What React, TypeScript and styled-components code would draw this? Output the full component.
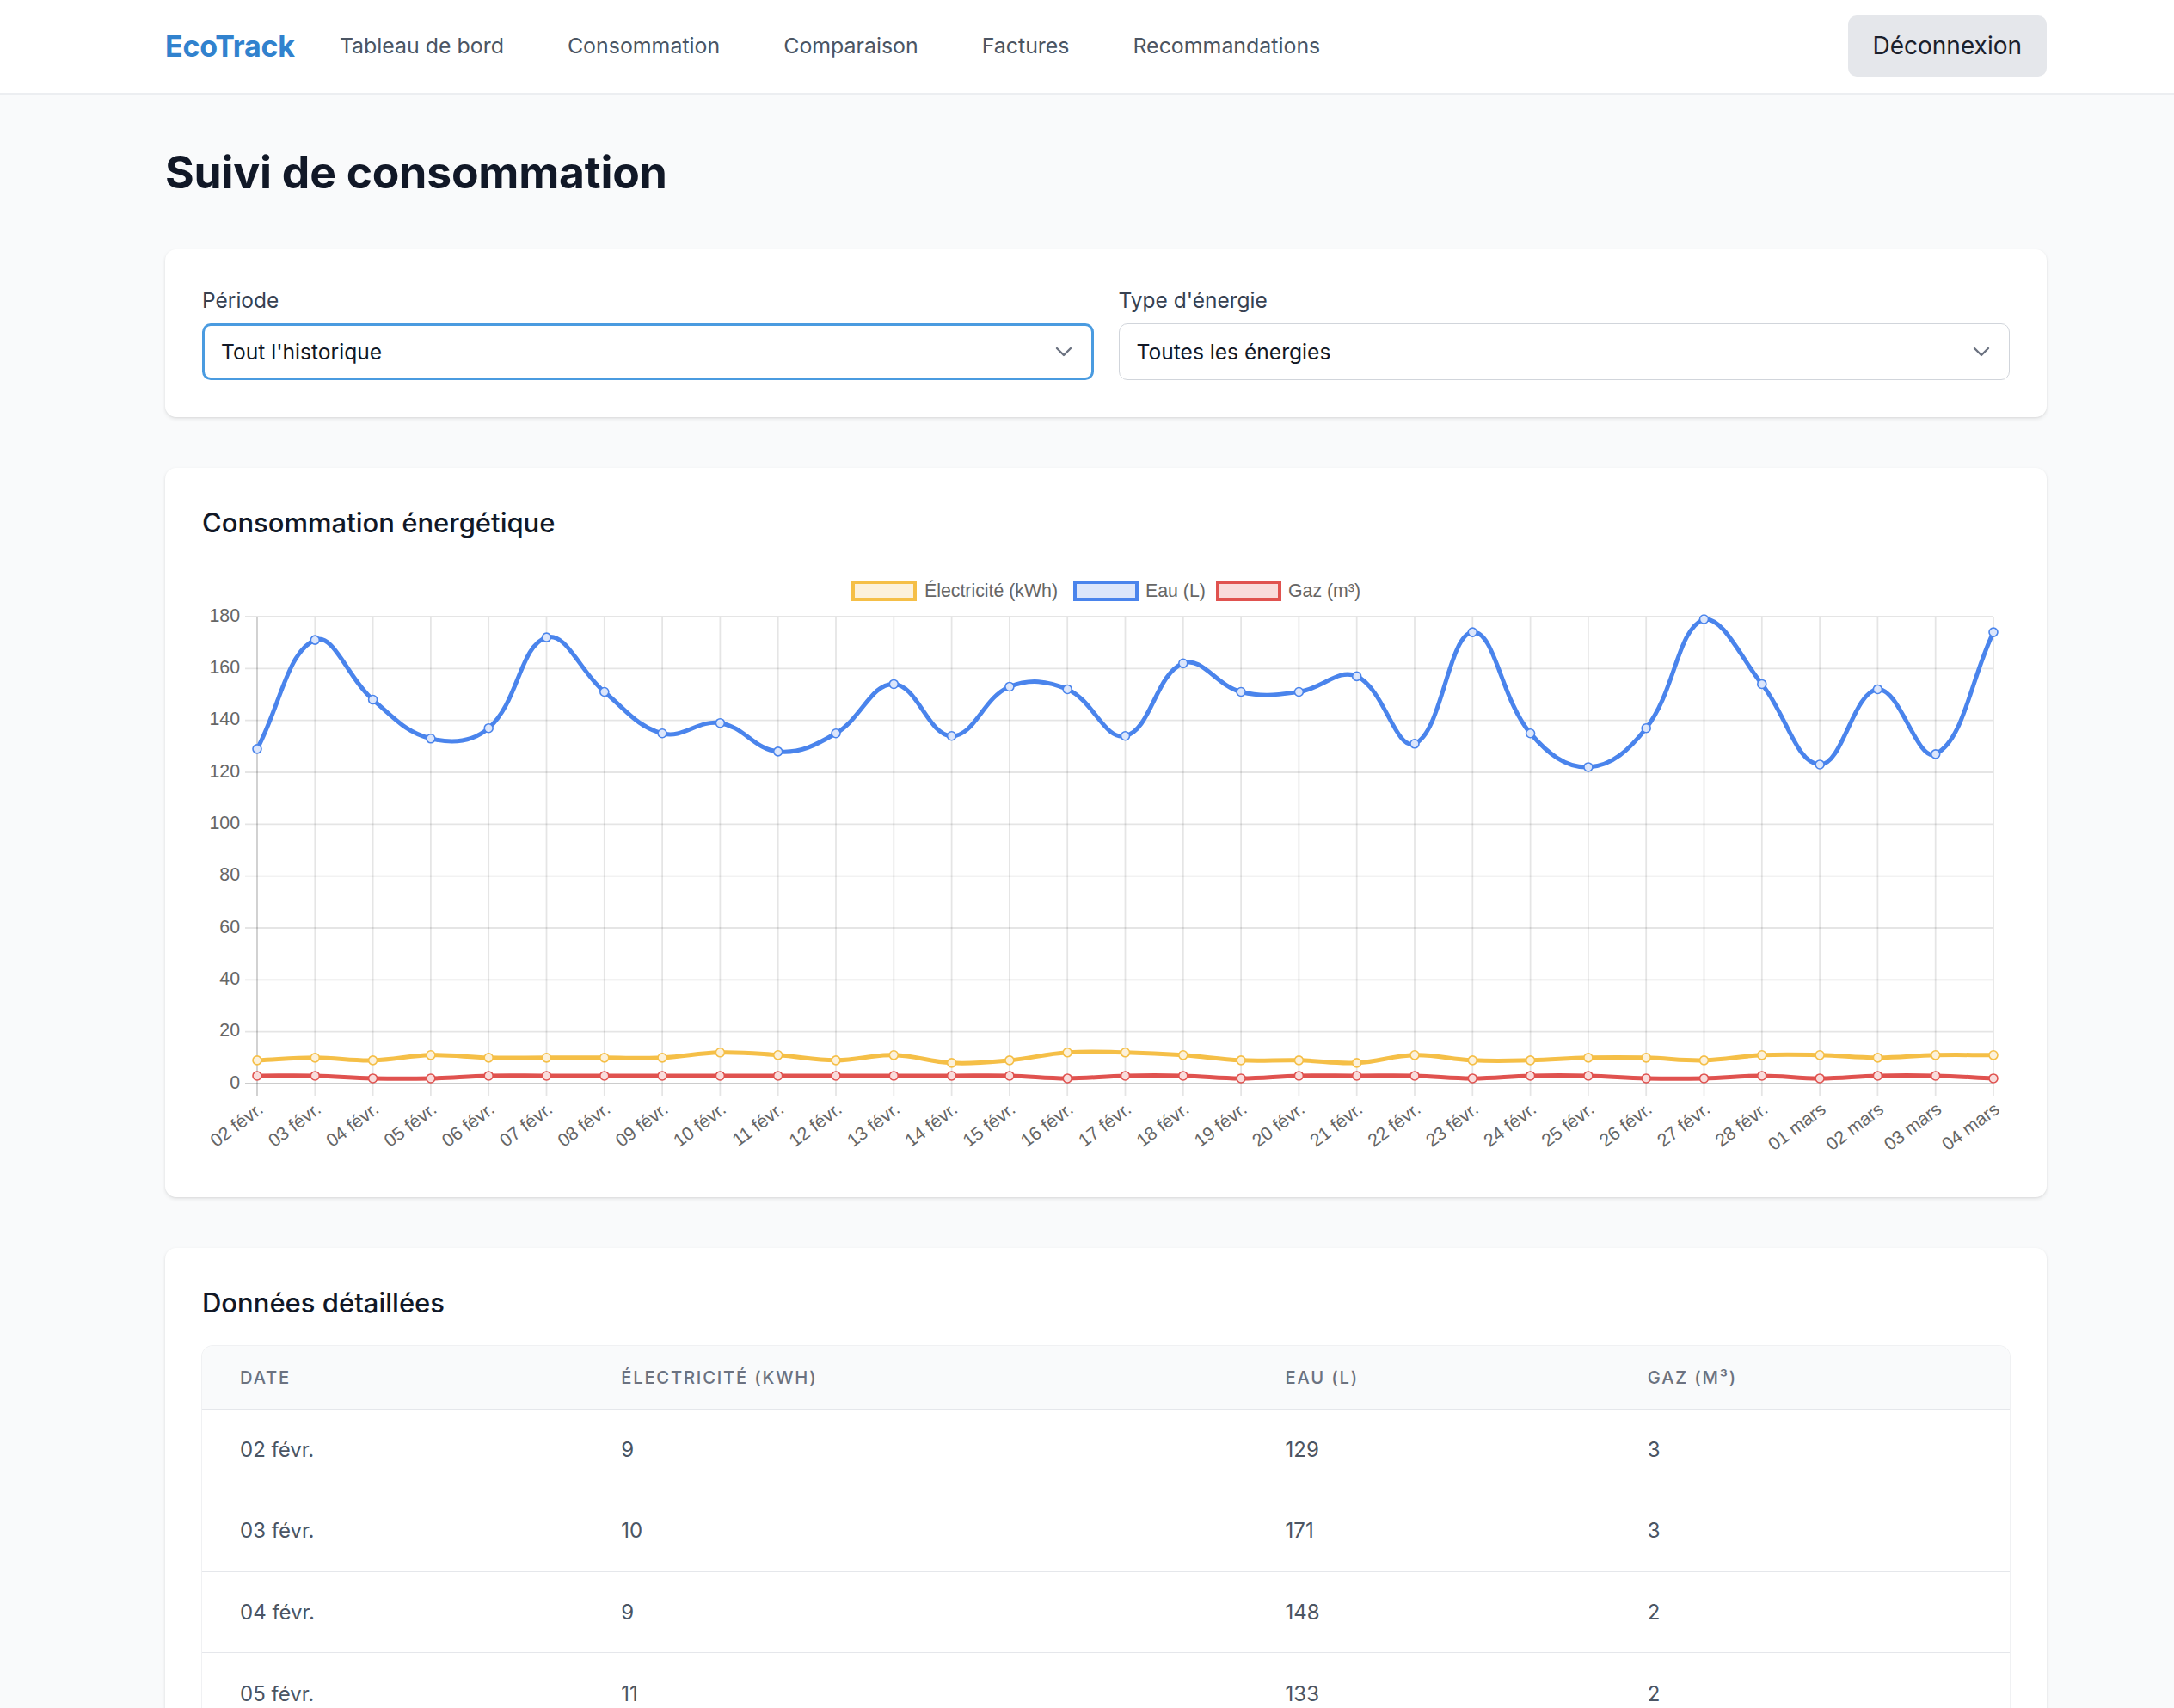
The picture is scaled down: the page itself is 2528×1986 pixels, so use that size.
import React from 'react';
import styled, { createGlobalStyle } from 'styled-components';

const GlobalStyle = createGlobalStyle`
  html, body { margin: 0; padding: 0; background: #f9fafb; }
  body { font-family: Inter, "Noto Sans", sans-serif; color: #1f2937; }
  * { box-sizing: border-box; }
`;

const labels = [
  ...Array.from({ length: 27 }, (_, i) => `${String(i + 2).padStart(2, '0')} févr.`),
  '01 mars', '02 mars', '03 mars', '04 mars',
];
const elec = [9,10,9,11,10,10,10,10,12,11,9,11,8,9,12,12,11,9,9,8,11,9,9,10,10,9,11,11,10,11,11];
const water = [129,171,148,133,137,172,151,135,139,128,135,154,134,153,152,134,162,151,151,157,131,174,135,122,137,179,154,123,152,127,174];
const gas = [3,3,2,2,3,3,3,3,3,3,3,3,3,3,2,3,3,2,3,3,3,2,3,3,2,2,3,2,3,3,2];

const Nav = styled.nav`
  background: #ffffff;
  border-bottom: 2px solid #eceef1;
  height: 110px;
  display: flex;
  align-items: center;
  padding: 0 148px 2px 192px;
`;
const Logo = styled.div`
  font-size: 34px;
  font-weight: 700;
  color: #3182ce;
  letter-spacing: -0.2px;
`;
const NavLinks = styled.div`
  display: flex;
  gap: 74px;
  margin-left: 52px;
  flex: 1;
`;
const NavLink = styled.a`
  font-size: 24.9px;
  color: #4b5563;
  text-decoration: none;
`;
const LogoutButton = styled.button`
  height: 71px;
  padding: 0 29px;
  border: none;
  border-radius: 10px;
  background: #e5e7eb;
  color: #1a202c;
  font-family: inherit;
  font-size: 28px;
`;

const Main = styled.main`
  padding: 61px 148px 0 192px;
`;
const PageTitle = styled.h1`
  margin: 0 0 61px;
  font-size: 51.6px;
  line-height: 58px;
  font-weight: 700;
  color: #111827;
  letter-spacing: -0.2px;
`;
const Card = styled.section`
  background: #ffffff;
  border-radius: 13px;
  box-shadow: 0 2px 5px rgba(0, 0, 0, 0.09), 0 1px 2px rgba(0, 0, 0, 0.05);
  padding: 43px;
  margin-bottom: 59px;
`;
const FilterGrid = styled.div`
  display: grid;
  grid-template-columns: 1fr 1fr;
  gap: 29px;
`;
const Field = styled.div`
  display: flex;
  flex-direction: column;
`;
const Label = styled.label`
  font-size: 24.5px;
  line-height: 32px;
  color: #374151;
  margin-bottom: 11px;
`;
const SelectBox = styled.div<{ $focused?: boolean }>`
  height: 66px;
  display: flex;
  align-items: center;
  justify-content: space-between;
  padding: 0 22px 0 ${p => (p.$focused ? 19 : 20)}px;
  border-radius: 10px;
  border: ${p => (p.$focused ? '3px solid #4a9be0' : '1.6px solid #d1d5db')};
  background: #ffffff;
  font-size: 24.6px;
  color: #111827;
`;
const CardTitle = styled.h2`
  margin: 0;
  font-size: 31px;
  line-height: 42px;
  font-weight: 500;
  color: #111827;
`;
const ChartWrap = styled.div`
  margin-top: 22px;
`;
const TableWrap = styled.div`
  margin-top: 29px;
  border-radius: 13px 13px 0 0;
  overflow: hidden;
  box-shadow: 0 0 0 1px #f0f1f3;
`;
const Table = styled.table`
  width: 100%;
  border-collapse: collapse;
  table-layout: fixed;
`;
const Th = styled.th<{ $w: number }>`
  width: ${p => p.$w}px;
  text-align: left;
  height: 73px;
  padding: 0 0 0 44px;
  background: #f9fafb;
  font-size: 20.2px;
  font-weight: 500;
  letter-spacing: 1.8px;
  text-transform: uppercase;
  color: #6b7280;
  border-bottom: 1.6px solid #e5e7eb;
`;
const Td = styled.td`
  height: 94.6px;
  padding: 0 0 0 44px;
  font-size: 24px;
  color: #4b5563;
  border-bottom: 1.6px solid #e5e7eb;
`;

const Chevron = () => (
  <svg width="20" height="12" viewBox="0 0 20 12" fill="none">
    <path d="M2 2 L10 10 L18 2" stroke="#6b7280" strokeWidth="2.4" strokeLinecap="round" strokeLinejoin="round" />
  </svg>
);

// Chart geometry
const W = 2101;
const H = 698;
const L = 64;
const R = 2083;
const T = 66;
const B = 609;
const MAX = 180;
const FS = 21.3;
const xs = (i: number) => L + (i * (R - L)) / 30;
const ys = (v: number) => B - (v / MAX) * (B - T);

type Pt = { x: number; y: number };
function splinePath(values: number[]): string {
  const pts: Pt[] = values.map((v, i) => ({ x: xs(i), y: ys(v) }));
  const t = 0.4;
  const cps = pts.map((cur, i) => {
    const prev = i === 0 ? cur : pts[i - 1];
    const next = i === pts.length - 1 ? cur : pts[i + 1];
    const d01 = Math.hypot(cur.x - prev.x, cur.y - prev.y);
    const d12 = Math.hypot(next.x - cur.x, next.y - cur.y);
    let s01 = d01 / (d01 + d12);
    let s12 = d12 / (d01 + d12);
    if (isNaN(s01)) s01 = 0;
    if (isNaN(s12)) s12 = 0;
    const fa = t * s01;
    const fb = t * s12;
    const clampY = (y: number) => Math.min(B, Math.max(T, y));
    const clampX = (x: number) => Math.min(R, Math.max(L, x));
    return {
      p: { x: clampX(cur.x - fa * (next.x - prev.x)), y: clampY(cur.y - fa * (next.y - prev.y)) },
      n: { x: clampX(cur.x + fb * (next.x - prev.x)), y: clampY(cur.y + fb * (next.y - prev.y)) },
    };
  });
  let d = `M${pts[0].x},${pts[0].y}`;
  for (let i = 1; i < pts.length; i++) {
    d += ` C${cps[i - 1].n.x},${cps[i - 1].n.y} ${cps[i].p.x},${cps[i].p.y} ${pts[i].x},${pts[i].y}`;
  }
  return d;
}

const series = [
  { name: 'Électricité (kWh)', data: elec, color: '#f5bf47', fill: '#fcf1db', boxX: 755, textX: 840 },
  { name: 'Eau (L)', data: water, color: '#4a84ec', fill: '#dce6fb', boxX: 1013, textX: 1097 },
  { name: 'Gaz (m³)', data: gas, color: '#e0524f', fill: '#f9dcdb', boxX: 1179, textX: 1263 },
];

const ChartSvg = styled.svg`
  display: block;
  font-family: "Liberation Sans", Arial, sans-serif;
`;

const EnergyChart = () => {
  const ticks = [0, 20, 40, 60, 80, 100, 120, 140, 160, 180];
  return (
    <ChartSvg width={W} height={H} viewBox={`0 0 ${W} ${H}`}>
      {series.map(s => (
        <g key={s.name}>
          <rect x={s.boxX + 2} y={26} width={72} height={20} fill={s.fill} stroke={s.color} strokeWidth={4} />
          <text x={s.textX} y={37} fontSize={FS} fill="#666" dominantBaseline="middle">{s.name}</text>
        </g>
      ))}
      {ticks.map(v => (
        <g key={v}>
          <line x1={L - 14} x2={R} y1={ys(v)} y2={ys(v)} stroke={v === 0 ? 'rgba(0,0,0,0.2)' : 'rgba(0,0,0,0.1)'} strokeWidth={1.8} />
          <text x={44} y={ys(v)} fontSize={FS} fill="#666" textAnchor="end" dominantBaseline="middle">{v}</text>
        </g>
      ))}
      {labels.map((lab, i) => (
        <g key={lab}>
          <line x1={xs(i)} x2={xs(i)} y1={T} y2={B + 14} stroke={i === 0 ? 'rgba(0,0,0,0.2)' : 'rgba(0,0,0,0.1)'} strokeWidth={1.8} />
          <text
            x={xs(i) + 5}
            y={B + 28}
            fontSize={FS}
            fill="#666"
            textAnchor="end"
            dominantBaseline="middle"
            transform={`rotate(-37 ${xs(i) + 5} ${B + 28})`}
          >
            {lab}
          </text>
        </g>
      ))}
      {series.map(s => (
        <g key={s.name}>
          <path d={splinePath(s.data)} fill="none" stroke={s.color} strokeWidth={5} strokeLinejoin="round" />
          {s.data.map((v, i) => (
            <circle key={i} cx={xs(i)} cy={ys(v)} r={5} fill={s.fill} stroke={s.color} strokeWidth={1.6} />
          ))}
        </g>
      ))}
    </ChartSvg>
  );
};

export default function App() {
  const colW = [443, 772, 421, 465];
  return (
    <>
      <GlobalStyle />
      <Nav>
        <Logo>EcoTrack</Logo>
        <NavLinks>
          <NavLink>Tableau de bord</NavLink>
          <NavLink>Consommation</NavLink>
          <NavLink>Comparaison</NavLink>
          <NavLink>Factures</NavLink>
          <NavLink>Recommandations</NavLink>
        </NavLinks>
        <LogoutButton>Déconnexion</LogoutButton>
      </Nav>
      <Main>
        <PageTitle>Suivi de consommation</PageTitle>
        <Card>
          <FilterGrid>
            <Field>
              <Label>Période</Label>
              <SelectBox $focused>
                <span>Tout l'historique</span>
                <Chevron />
              </SelectBox>
            </Field>
            <Field>
              <Label>Type d'énergie</Label>
              <SelectBox>
                <span>Toutes les énergies</span>
                <Chevron />
              </SelectBox>
            </Field>
          </FilterGrid>
        </Card>
        <Card>
          <CardTitle>Consommation énergétique</CardTitle>
          <ChartWrap>
            <EnergyChart />
          </ChartWrap>
        </Card>
        <Card>
          <CardTitle>Données détaillées</CardTitle>
          <TableWrap>
            <Table>
              <thead>
                <tr>
                  <Th $w={colW[0]}>Date</Th>
                  <Th $w={colW[1]}>Électricité (kWh)</Th>
                  <Th $w={colW[2]}>Eau (L)</Th>
                  <Th $w={colW[3]}>Gaz (m³)</Th>
                </tr>
              </thead>
              <tbody>
                {labels.map((lab, i) => (
                  <tr key={lab}>
                    <Td>{lab}</Td>
                    <Td>{elec[i]}</Td>
                    <Td>{water[i]}</Td>
                    <Td>{gas[i]}</Td>
                  </tr>
                ))}
              </tbody>
            </Table>
          </TableWrap>
        </Card>
      </Main>
    </>
  );
}
